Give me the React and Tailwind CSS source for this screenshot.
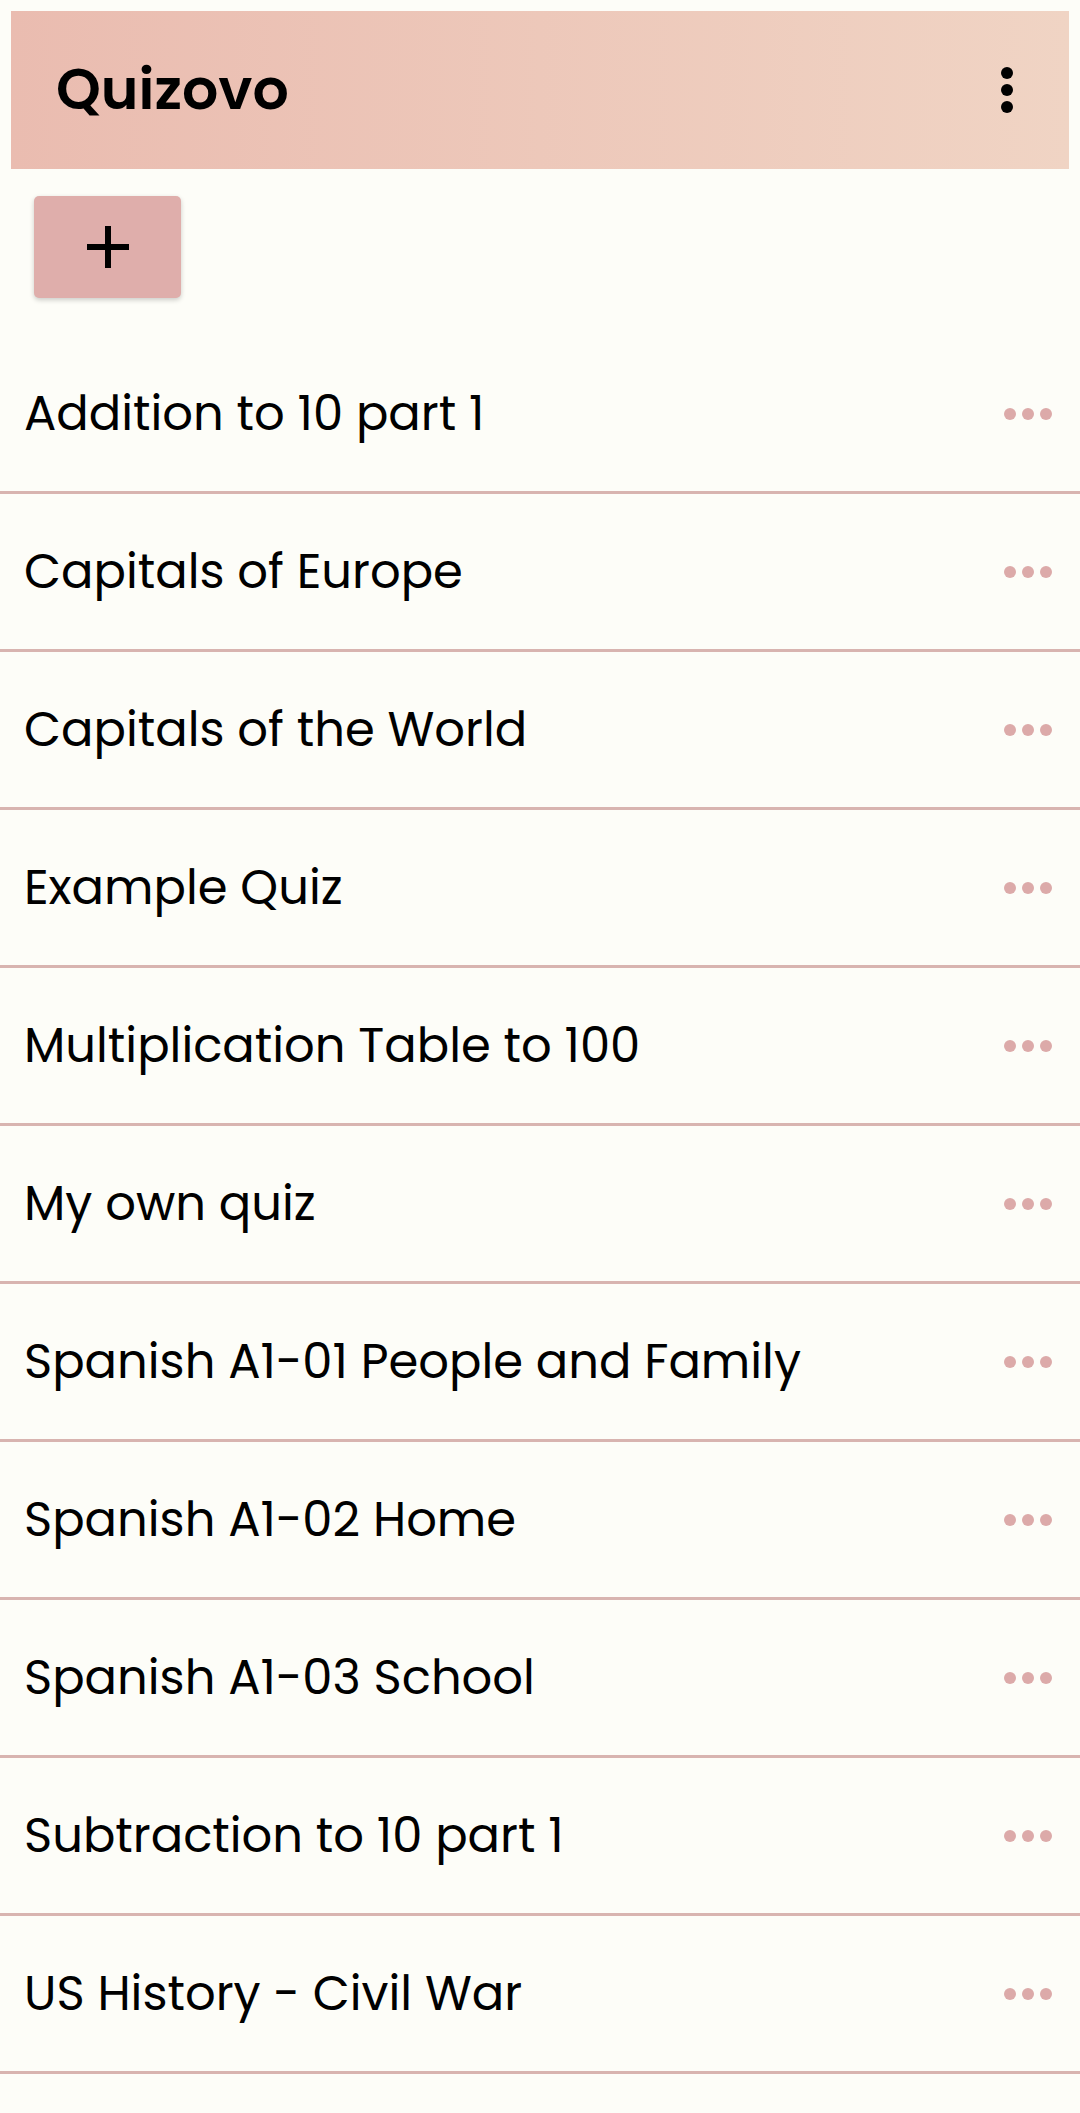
const quizzes = [
  'Addition to 10 part 1',
  'Capitals of Europe',
  'Capitals of the World',
  'Example Quiz',
  'Multiplication Table to 100',
  'My own quiz',
  'Spanish A1-01 People and Family',
  'Spanish A1-02 Home',
  'Spanish A1-03 School',
  'Subtraction to 10 part 1',
  'US History - Civil War',
];

function Dots({ className, vertical }) {
  return (
    <div className={`flex ${vertical ? 'flex-col gap-[5px]' : 'flex-row gap-[6px]'}`}>
      <span className={`w-[12px] h-[12px] rounded-full ${className}`} />
      <span className={`w-[12px] h-[12px] rounded-full ${className}`} />
      <span className={`w-[12px] h-[12px] rounded-full ${className}`} />
    </div>
  );
}

export default function App() {
  return (
    <div
      className="min-h-[2113px] w-[1080px] bg-[#fdfdf8] text-black"
      style={{ fontFamily: 'Poppins, Inter, "Open Sans", sans-serif' }}
    >
      {/* Top bar */}
      <div className="pt-[11px] px-[11px]">
        <header className="h-[158px] flex items-center justify-between pl-[45px] pr-[56px] bg-gradient-to-r from-[#eabcb0] to-[#f0d4c4]">
          <h1 className="text-[57px] font-semibold">Quizovo</h1>
          <Dots vertical className="bg-black" />
        </header>
      </div>

      {/* Add button */}
      <div className="pl-[34px] pt-[27px] pb-[38px]">
        <button className="w-[147px] h-[102px] rounded-[5px] bg-[#dfaeab] shadow-[0_2px_5px_rgba(0,0,0,0.2)] flex items-center justify-center">
          <svg width="42" height="42" viewBox="0 0 42 42">
            <path d="M21 0v42M0 21h42" stroke="black" strokeWidth="6" />
          </svg>
        </button>
      </div>

      {/* Quiz list */}
      <ul>
        {quizzes.map((q) => (
          <li
            key={q}
            className="h-[158px] flex items-center justify-between pl-[24px] pr-[28px] border-b-[3px] border-[#d8b4b0]"
          >
            <span className="text-[48px]">{q}</span>
            <Dots className="bg-[#dcaaa9]" />
          </li>
        ))}
      </ul>
    </div>
  );
}
